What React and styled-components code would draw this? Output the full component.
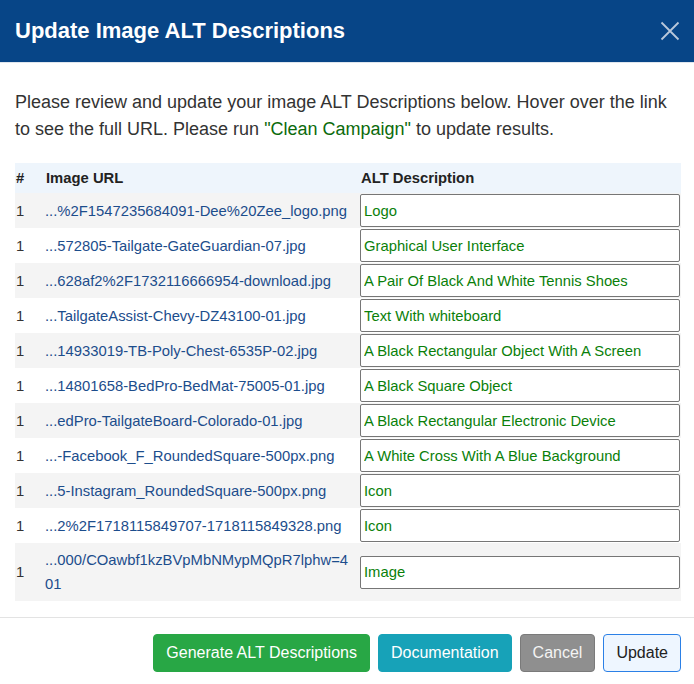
import React from "react";
import styled, { createGlobalStyle } from "styled-components";

const Global = createGlobalStyle`
  html, body { margin: 0; padding: 0; background: #fff; }
  body { font-family: "Liberation Sans", Arial, sans-serif; color: #333; }
  * { box-sizing: border-box; }
`;

const Dialog = styled.div`
  width: 694px;
  height: 684px;
  display: flex;
  flex-direction: column;
  background: #fff;
  overflow: hidden;
`;

const Header = styled.header`
  flex: 0 0 63px;
  height: 63px;
  background: #074587;
  border-bottom: 1px solid #dfe6ee;
  display: flex;
  align-items: center;
  justify-content: space-between;
  padding: 0 13px 0 15px;
`;

const Title = styled.h1`
  margin: 0;
  font-size: 22px;
  font-weight: bold;
  color: #fff;
`;

const CloseButton = styled.button`
  width: 22px;
  height: 22px;
  padding: 0;
  border: 0;
  background: transparent;
  display: flex;
  align-items: center;
  justify-content: center;
  cursor: pointer;
`;

const Body = styled.div`
  flex: 0 0 auto;
  padding: 26px 13px 16px 15px;
`;

const Intro = styled.p`
  margin: 0 0 20px;
  font-size: 18px;
  line-height: 27px;
  color: #333;
`;

const Highlight = styled.span`
  color: #0b6a0b;
`;

const Table = styled.table`
  width: 666px;
  border-collapse: collapse;
  table-layout: fixed;
  font-size: 14.8px;
  line-height: 24px;
`;

const HeadRow = styled.tr`
  background: #eef5fc;
  height: 30px;
`;

const Th = styled.th`
  text-align: left;
  font-weight: bold;
  color: #222;
  padding: 0 0 0 1px;
  width: ${(p) => p.$w || "auto"};
  vertical-align: middle;
`;

const Row = styled.tr`
  background: ${(p) => (p.$odd ? "#f4f4f4" : "#fff")};
  height: ${(p) => (p.$tall ? "58px" : "35px")};
`;

const Num = styled.td`
  padding: 0 0 0 1px;
  color: #333;
  vertical-align: middle;
`;

const UrlCell = styled.td`
  padding: 0 6px 0 0;
  vertical-align: middle;
  word-break: break-all;
`;

const UrlLink = styled.a`
  color: #1c4d8c;
  text-decoration: none;
`;

const AltCell = styled.td`
  padding: 0 1px 0 0;
  vertical-align: middle;
`;

const AltInput = styled.input`
  display: block;
  width: 100%;
  height: 33px;
  margin: 1px 0;
  border: 1px solid #767676;
  border-radius: 2px;
  padding: 0 3px;
  font-family: "Liberation Sans", Arial, sans-serif;
  font-size: 14.8px;
  color: #0a7f0a;
  background: #fff;
  outline: none;
`;

const Footer = styled.footer`
  flex: 0 0 auto;
  border-top: 1px solid #e3e3e3;
  padding: 16px 13px 12px 15px;
  display: flex;
  justify-content: flex-end;
  gap: 8px;
`;

const variants = {
  green: { bg: "#28a745", border: "#28a745", color: "#fff" },
  teal: { bg: "#17a2b8", border: "#17a2b8", color: "#fff" },
  gray: { bg: "#8f8f8f", border: "#7a7a7a", color: "#f4f4f4" },
  light: { bg: "#eef6ff", border: "#2b80e6", color: "#222" },
};

const Button = styled.button`
  height: 38px;
  padding: 0 12px;
  border-radius: 4px;
  font-family: "Liberation Sans", Arial, sans-serif;
  font-size: 16px;
  cursor: pointer;
  background: ${(p) => variants[p.$v].bg};
  border: 1px solid ${(p) => variants[p.$v].border};
  color: ${(p) => variants[p.$v].color};
`;

const rows = [
  ["...%2F1547235684091-Dee%20Zee_logo.png", "Logo"],
  ["...572805-Tailgate-GateGuardian-07.jpg", "Graphical User Interface"],
  ["...628af2%2F1732116666954-download.jpg", "A Pair Of Black And White Tennis Shoes"],
  ["...TailgateAssist-Chevy-DZ43100-01.jpg", "Text With whiteboard"],
  ["...14933019-TB-Poly-Chest-6535P-02.jpg", "A Black Rectangular Object With A Screen"],
  ["...14801658-BedPro-BedMat-75005-01.jpg", "A Black Square Object"],
  ["...edPro-TailgateBoard-Colorado-01.jpg", "A Black Rectangular Electronic Device"],
  ["...-Facebook_F_RoundedSquare-500px.png", "A White Cross With A Blue Background"],
  ["...5-Instagram_RoundedSquare-500px.png", "Icon"],
  ["...2%2F1718115849707-1718115849328.png", "Icon"],
  ["...000/COawbf1kzBVpMbNMypMQpR7lphw=401", "Image"],
];

export default function App() {
  return (
    <>
      <Global />
      <Dialog>
        <Header>
          <Title>Update Image ALT Descriptions</Title>
          <CloseButton aria-label="Close">
            <svg width="20" height="20" viewBox="0 0 20 20">
              <path d="M1.5 1.5 L18.5 18.5 M18.5 1.5 L1.5 18.5" stroke="#b9c8db" strokeWidth="1.8" fill="none" />
            </svg>
          </CloseButton>
        </Header>
        <Body>
          <Intro>
            Please review and update your image ALT Descriptions below. Hover over the link to see the full URL. Please run{" "}
            <Highlight>"Clean Campaign"</Highlight> to update results.
          </Intro>
          <Table>
            <thead>
              <HeadRow>
                <Th $w="30px">#</Th>
                <Th $w="315px">Image URL</Th>
                <Th>ALT Description</Th>
              </HeadRow>
            </thead>
            <tbody>
              {rows.map(([url, alt], i) => (
                <Row key={i} $odd={i % 2 === 0} $tall={i === rows.length - 1}>
                  <Num>1</Num>
                  <UrlCell>
                    <UrlLink href="#" title={url}>{url}</UrlLink>
                  </UrlCell>
                  <AltCell>
                    <AltInput defaultValue={alt} />
                  </AltCell>
                </Row>
              ))}
            </tbody>
          </Table>
        </Body>
        <Footer>
          <Button $v="green">Generate ALT Descriptions</Button>
          <Button $v="teal">Documentation</Button>
          <Button $v="gray">Cancel</Button>
          <Button $v="light">Update</Button>
        </Footer>
      </Dialog>
    </>
  );
}
